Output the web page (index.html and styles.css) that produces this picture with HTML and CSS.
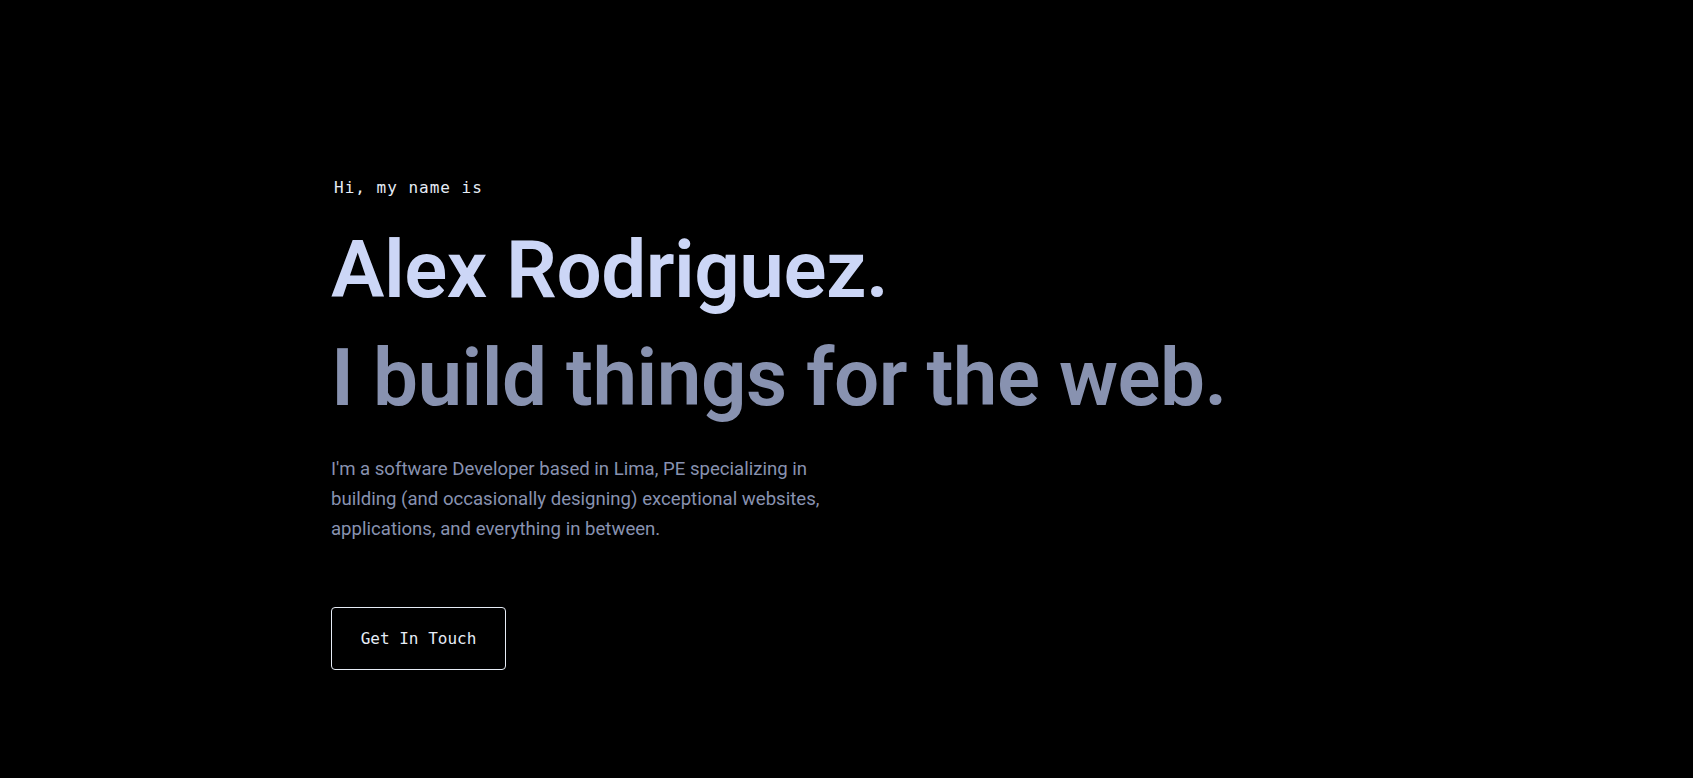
FILE: index.html
```html
<!DOCTYPE html>
<html lang="en">
<head>
<meta charset="utf-8">
<title>Alex Rodriguez</title>
<link rel="stylesheet" href="styles.css">
</head>
<body>
<main class="page">
  <section class="hero">
    <p class="hero-intro">Hi, my name is</p>
    <h1 class="hero-name">Alex Rodriguez.</h1>
    <h2 class="hero-tagline">I build things for the web.</h2>
    <p class="hero-text">I'm a software Developer based in Lima, PE specializing in building (and occasionally designing) exceptional websites, applications, and everything in between.</p>
    <a class="hero-button" href="#contact">Get In Touch</a>
  </section>
</main>
</body>
</html>
```
FILE: styles.css
```css
html, body {
  margin: 0;
  padding: 0;
  background: #000;
}
body {
  font-family: "Roboto", "Liberation Sans", sans-serif;
  color: #8892b0;
}
.page {
  min-height: 778px;
  box-sizing: border-box;
  padding: 178px 0 0 331px;
}
.hero {
  display: flex;
  flex-direction: column;
  align-items: flex-start;
}
.hero-intro {
  margin: 0 0 0 3px;
  font-family: "DejaVu Sans Mono", monospace;
  font-size: 16px;
  letter-spacing: 1px;
  color: #e6ecf6;
  line-height: 20px;
}
.hero-name {
  margin: 18px 0 0 0;
  font-size: 80px;
  font-weight: 600;
  line-height: 108px;
  color: #ccd6f6;
  letter-spacing: -0.5px;
}
.hero-tagline {
  margin: 0;
  font-size: 80px;
  font-weight: 600;
  line-height: 108px;
  color: #8892b0;
  letter-spacing: -0.5px;
}
.hero-text {
  margin: 22px 0 0 0;
  max-width: 510px;
  font-size: 18.6px;
  font-weight: 400;
  line-height: 30px;
  color: #8892b0;
}
.hero-button {
  margin-top: 63px;
  width: 175px;
  height: 63px;
  box-sizing: border-box;
  display: flex;
  align-items: center;
  justify-content: center;
  border: 1px solid #e6ecf6;
  border-radius: 4px;
  font-family: "DejaVu Sans Mono", monospace;
  font-size: 16px;
  color: #e6ecf6;
  text-decoration: none;
}
```
